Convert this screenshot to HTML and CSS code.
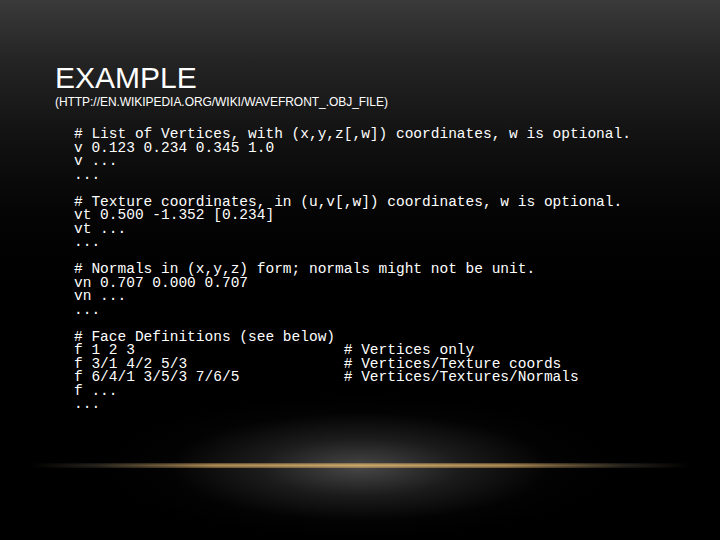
FILE: index.html
```html
<!DOCTYPE html>
<html>
<head>
<meta charset="utf-8">
<link rel="stylesheet" href="styles.css">
</head>
<body>
<div class="slide">
  <div class="glow"></div>
  <div class="line"></div>
  <div class="content">
    <h1 class="title">EXAMPLE</h1>
    <div class="subtitle">(HTTP://EN.WIKIPEDIA.ORG/WIKI/WAVEFRONT_.OBJ_FILE)</div>
<pre class="code"># List of Vertices, with (x,y,z[,w]) coordinates, w is optional.
v 0.123 0.234 0.345 1.0
v ...
...

# Texture coordinates, in (u,v[,w]) coordinates, w is optional.
vt 0.500 -1.352 [0.234]
vt ...
...

# Normals in (x,y,z) form; normals might not be unit.
vn 0.707 0.000 0.707
vn ...
...

# Face Definitions (see below)
f 1 2 3                        # Vertices only
f 3/1 4/2 5/3                  # Vertices/Texture coords
f 6/4/1 3/5/3 7/6/5            # Vertices/Textures/Normals
f ...
...</pre>
  </div>
</div>
</body>
</html>
```

FILE: styles.css
```css
html, body {
  margin: 0;
  padding: 0;
  background: #000;
}

.slide {
  position: relative;
  width: 720px;
  height: 540px;
  overflow: hidden;
  background: linear-gradient(to bottom, #3a3a3a 0px, #242424 60px, #111 140px, #050505 210px, #000 280px);
  color: #fff;
}

.glow {
  position: absolute;
  left: 110px;
  top: 395px;
  width: 500px;
  height: 144px;
  background: radial-gradient(ellipse 50% 50% at 50% 50%, rgba(95, 95, 95, 0.75) 0%, rgba(60, 60, 60, 0.45) 40%, rgba(20, 20, 20, 0.15) 75%, rgba(0, 0, 0, 0) 100%);
}

.line {
  position: absolute;
  left: 30px;
  top: 463px;
  width: 660px;
  height: 5px;
  background: linear-gradient(to right, rgba(0,0,0,0) 0%, rgba(120, 110, 90, 0.35) 10%, rgba(200, 160, 95, 0.9) 28%, rgba(210, 172, 105, 1) 50%, rgba(200, 160, 95, 0.9) 72%, rgba(120, 110, 90, 0.35) 90%, rgba(0,0,0,0) 100%);
  -webkit-mask-image: linear-gradient(to bottom, rgba(0,0,0,0.4), #000 45%, rgba(0,0,0,0.5));
  mask-image: linear-gradient(to bottom, rgba(0,0,0,0.4), #000 45%, rgba(0,0,0,0.5));
}

.content {
  position: relative;
  padding: 61px 0 0 55px;
}

.title {
  margin: 0;
  font-family: "Liberation Sans", Arial, sans-serif;
  font-weight: normal;
  font-size: 30px;
  line-height: 34px;
  letter-spacing: 0;
}

.subtitle {
  font-family: "Liberation Sans", Arial, sans-serif;
  font-size: 12px;
  line-height: 14px;
  letter-spacing: -0.05px;
}

.code {
  margin: 19px 0 0 19px;
  font-family: "Liberation Mono", "Courier New", monospace;
  font-size: 14.5px;
  line-height: 13.5px;
  color: #fff;
}
```
